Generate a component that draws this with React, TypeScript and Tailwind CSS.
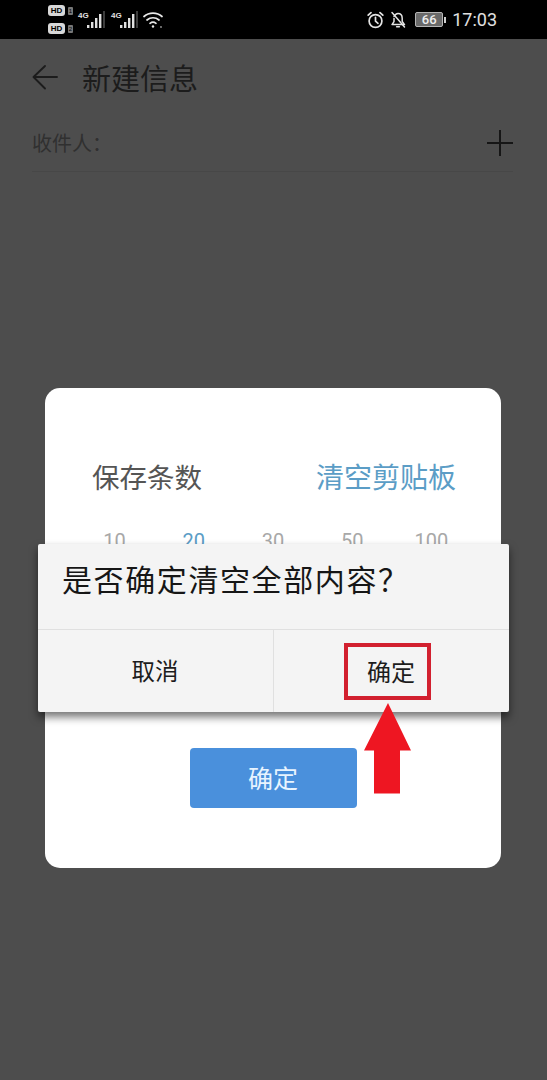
import React from "react";

const cjk = "font-['Noto_Sans_CJK_SC','Noto_Sans',sans-serif]";

const Signal = () => (
  <svg width="19" height="18" viewBox="0 0 19 18" fill="#e0e0e0">
    <rect x="0" y="14" width="2.4" height="3" />
    <rect x="4" y="11" width="2.4" height="6" />
    <rect x="8" y="7" width="2.4" height="10" />
    <rect x="12" y="3" width="2.4" height="14" />
    <rect x="16.4" y="0" width="1.2" height="17" fill="#666" />
  </svg>
);

const Hd = ({ n }: { n: string }) => (
  <div className="flex items-center gap-[3px]">
    <span className="flex h-[11px] w-[17px] items-center justify-center rounded-[3px] bg-[#d8d8d8] text-[8px] font-bold leading-none text-black font-['Liberation_Sans',sans-serif]">
      HD
    </span>
    <span className="flex h-[8px] w-[5px] items-center justify-center rounded-[1px] bg-[#777] text-[6px] leading-none text-black font-['Liberation_Sans',sans-serif]">
      {n}
    </span>
  </div>
);

const StatusBar = () => (
  <div className="flex h-[39px] shrink-0 items-center bg-black pl-[48px] pr-[50px] text-[#e0e0e0]">
    <div className="flex flex-col gap-[7px]">
      <Hd n="1" />
      <Hd n="2" />
    </div>
    <div className="ml-[5px] flex items-end">
      <span className="mb-[9px] w-[9px] text-[8px] font-bold leading-none font-['Liberation_Sans',sans-serif]">4G</span>
      <Signal />
    </div>
    <div className="ml-[5px] flex items-end">
      <span className="mb-[9px] w-[9px] text-[8px] font-bold leading-none font-['Liberation_Sans',sans-serif]">4G</span>
      <Signal />
    </div>
    <svg className="ml-[4px]" width="20" height="18" viewBox="0 0 20 18" fill="none" stroke="#e8e8e8" strokeWidth="1.7" strokeLinecap="round">
      <path d="M1 5.5C6 1 14 1 19 5.5" />
      <path d="M4 9C7.5 6 12.5 6 16 9" />
      <path d="M7 12.3C8.8 10.9 11.2 10.9 13 12.3" />
      <circle cx="10" cy="15.5" r="1.2" fill="#e8e8e8" stroke="none" />
      <circle cx="18" cy="16" r="0.9" fill="#999" stroke="none" />
    </svg>
    <div className="ml-auto flex items-center">
      <svg width="17" height="18" viewBox="0 0 17 18" fill="none" stroke="#e4e4e4" strokeWidth="1.7" strokeLinecap="round">
        <circle cx="8.5" cy="10" r="6.4" />
        <path d="M8.5 6.3V10.2L11 12.3" />
        <path d="M1.2 4.2L4 1.6M15.8 4.2L13 1.6" />
      </svg>
      <svg className="ml-[6px]" width="16" height="18" viewBox="0 0 16 18" fill="none" stroke="#e4e4e4" strokeWidth="1.5" strokeLinecap="round" strokeLinejoin="round">
        <path d="M4 5.5C5 3.3 6.5 2.4 8 2.4C10.8 2.4 12.2 4.6 12.2 7.2V10.5L14.5 13.6H2L4 10.6V7.5" />
        <path d="M6.6 15.8H9.4" />
        <path d="M2 1.5L14.5 16" />
      </svg>
      <div className="ml-[9px] flex items-center gap-[1px]">
        <div className="flex h-[15px] w-[28px] items-center justify-center rounded-[2px] border border-[#b5b5b5] bg-[#6a6a6a] text-[13px] font-medium leading-none text-[#eeeeee] font-['Roboto',sans-serif]">
          66
        </div>
        <div className="h-[6px] w-[2px] bg-[#cfcfcf]" />
      </div>
      <span className="ml-[6px] text-[18px] leading-none font-['Roboto',sans-serif]">17:03</span>
    </div>
  </div>
);

const Header = () => (
  <div className="flex h-[76px] shrink-0 items-center pl-[32px]">
    <svg width="26" height="26" viewBox="0 0 26 26" fill="none" stroke="#1c1c1c" strokeWidth="1.9" strokeLinecap="round" strokeLinejoin="round">
      <path d="M25 13H2" />
      <path d="M13 2L1.5 13L13 24.5" />
    </svg>
    <span className={`ml-[24px] text-[29px] leading-none text-[#1c1c1c] ${cjk}`}>新建信息</span>
  </div>
);

const Recipient = () => (
  <div className="ml-[32px] mr-[34px] flex h-[57px] shrink-0 items-center justify-between border-b border-[#474747]">
    <span className={`text-[20px] leading-none text-[#303030] ${cjk}`}>收件人：</span>
    <svg width="26" height="26" viewBox="0 0 26 26" stroke="#161616" strokeWidth="2">
      <path d="M0 13H26M13 0V26" />
    </svg>
  </div>
);

const options = ["10", "20", "30", "50", "100"];

const ClipboardCard = () => (
  <div className="ml-[45px] mr-[46px] mt-[216px] flex h-[480px] flex-col rounded-[15px] bg-white">
    <div className="mt-[70px] flex items-center justify-between pl-[47px] pr-[45px]">
      <span className={`text-[27.5px] leading-[36px] text-[#555555] ${cjk}`}>保存条数</span>
      <span className={`text-[28px] leading-[36px] text-[#5b9dc6] ${cjk}`}>清空剪贴板</span>
    </div>
    <div className="mt-[35px] grid grid-cols-5 px-[30px]">
      {options.map((o) => (
        <span
          key={o}
          className={`text-center text-[20px] leading-[24px] font-['Roboto',sans-serif] ${o === "20" ? "text-[#5b9dc6]" : "text-[#a8a8a8]"}`}
        >
          {o}
        </span>
      ))}
    </div>
    <button className={`mx-auto mt-[195px] h-[60px] w-[167px] rounded-[4px] bg-[#4a90dc] text-[25px] text-[#e8f4ff] ${cjk}`}>
      确定
    </button>
  </div>
);

const ConfirmDialog = () => (
  <div className="absolute left-[38px] top-[544px] flex h-[168px] w-[471px] flex-col rounded-[2px] bg-[#f4f4f4] shadow-[0_5px_8px_rgba(0,0,0,0.55)]">
    <div className={`flex h-[86px] items-center border-b border-[#e0e0e0] pb-[17px] pl-[24px] text-[30px] leading-none tracking-[1.6px] text-[#161616] ${cjk}`}>
      是否确定清空全部内容？
    </div>
    <div className="flex flex-1">
      <div className={`flex w-[236px] items-center justify-center border-r border-[#e0e0e0] pr-[1px] text-[23.5px] text-[#1c1c1c] ${cjk}`}>
        取消
      </div>
      <div className="flex flex-1 items-center justify-center pr-[8px]">
        <div className={`flex h-[57px] w-[87px] items-center justify-center border-[4px] border-[#d2202f] pb-[1px] pl-[7px] text-[24px] text-[#1c1c1c] ${cjk}`}>
          确定
        </div>
      </div>
    </div>
  </div>
);

const RedArrow = () => (
  <svg className="absolute left-[364px] top-[703px]" width="47" height="91" viewBox="0 0 47 91" fill="#ee1622">
    <path d="M24 0L47 47.5H36V90.5H10V47.5H0Z" />
  </svg>
);

export default function App() {
  return (
    <div className="relative flex h-[1080px] w-[547px] flex-col overflow-hidden bg-[#4d4d4d]">
      <StatusBar />
      <Header />
      <Recipient />
      <ClipboardCard />
      <ConfirmDialog />
      <RedArrow />
    </div>
  );
}
